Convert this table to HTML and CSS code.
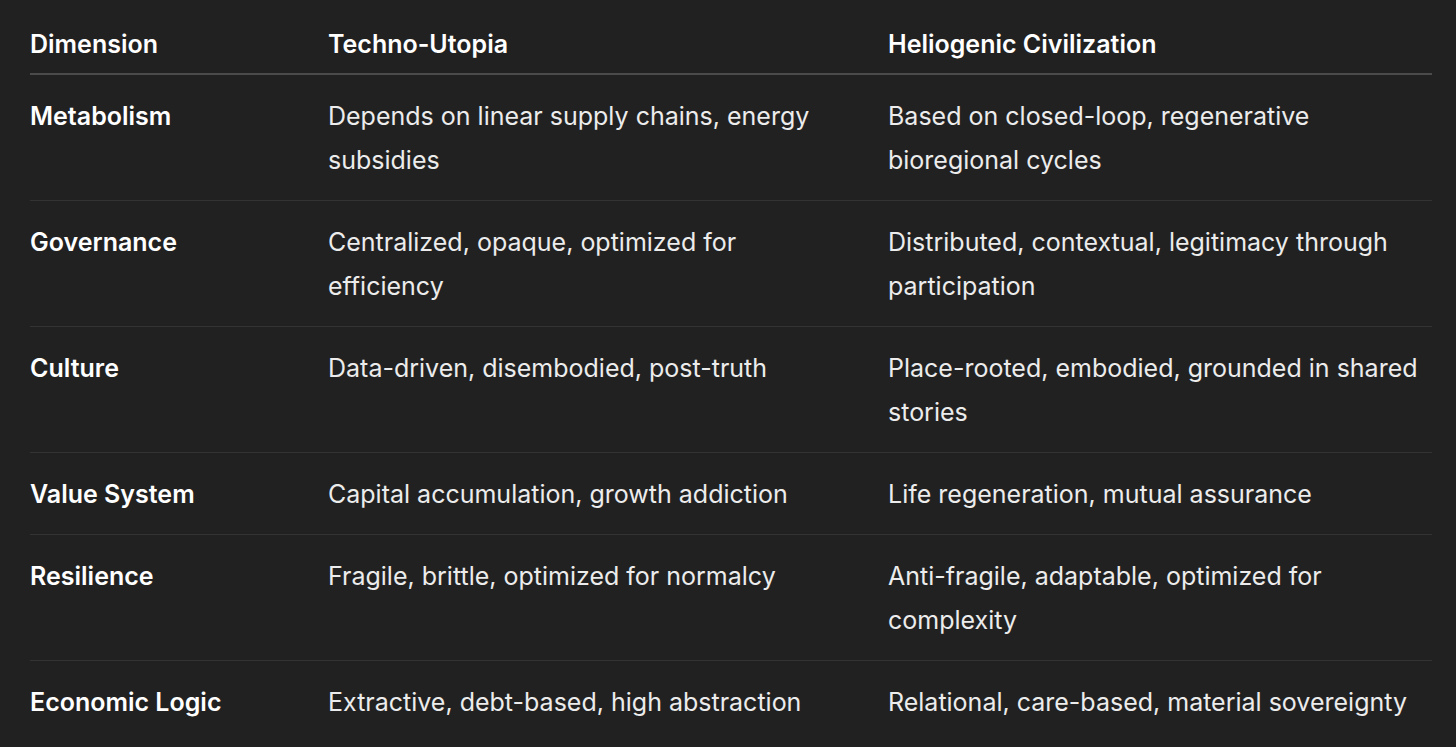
FILE: index.html
```html
<!DOCTYPE html>
<html lang="en">
<head>
<meta charset="utf-8">
<title>Comparison</title>
<link rel="stylesheet" href="styles.css">
</head>
<body>
<div class="table">
  <div class="row head">
    <div class="cell">Dimension</div>
    <div class="cell">Techno-Utopia</div>
    <div class="cell">Heliogenic Civilization</div>
  </div>
  <div class="row">
    <div class="cell key">Metabolism</div>
    <div class="cell">Depends on linear supply chains, energy subsidies</div>
    <div class="cell">Based on closed-loop, regenerative bioregional cycles</div>
  </div>
  <div class="row">
    <div class="cell key">Governance</div>
    <div class="cell">Centralized, opaque, optimized for efficiency</div>
    <div class="cell">Distributed, contextual, legitimacy through participation</div>
  </div>
  <div class="row">
    <div class="cell key">Culture</div>
    <div class="cell">Data-driven, disembodied, post-truth</div>
    <div class="cell">Place-rooted, embodied, grounded in shared stories</div>
  </div>
  <div class="row">
    <div class="cell key">Value System</div>
    <div class="cell">Capital accumulation, growth addiction</div>
    <div class="cell">Life regeneration, mutual assurance</div>
  </div>
  <div class="row">
    <div class="cell key">Resilience</div>
    <div class="cell">Fragile, brittle, optimized for normalcy</div>
    <div class="cell">Anti-fragile, adaptable, optimized for complexity</div>
  </div>
  <div class="row last">
    <div class="cell key">Economic Logic</div>
    <div class="cell">Extractive, debt-based, high abstraction</div>
    <div class="cell">Relational, care-based, material sovereignty</div>
  </div>
</div>
</body>
</html>
```
FILE: styles.css
```css
html, body {
  margin: 0;
  padding: 0;
  background: #212121;
}
body {
  font-family: Inter, "Noto Sans", sans-serif;
  font-size: 25px;
  line-height: 44px;
  color: #ececec;
  -webkit-font-smoothing: antialiased;
}
.table {
  margin: 0 24px 0 30px;
  padding-top: 22px;
}
.row {
  display: grid;
  grid-template-columns: 298px 560px 1fr;
  border-bottom: 1px solid #333333;
  padding: 19px 0 18px;
}
.row.head {
  padding: 0 0 7px;
  border-bottom: 2px solid #4b4b4b;
  color: #ffffff;
  font-weight: 600;
}
.row.last {
  border-bottom: none;
}
.cell {
  padding-right: 32px;
}
.cell:last-child {
  padding-right: 0;
}
.key {
  font-weight: 600;
  color: #ffffff;
}
```
